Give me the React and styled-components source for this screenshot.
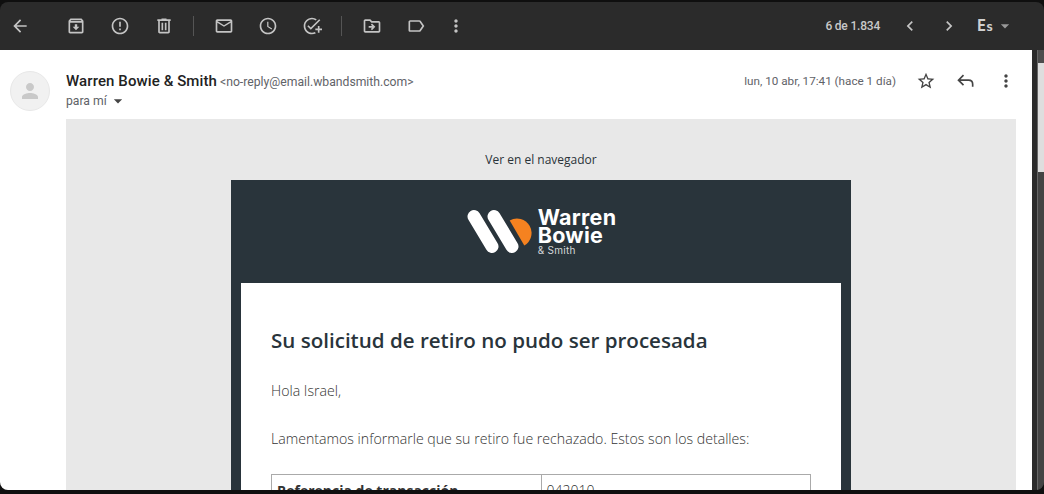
import React from 'react';
import styled, { createGlobalStyle } from 'styled-components';
import {
  MdArrowBack,
  MdOutlineArchive,
  MdErrorOutline,
  MdOutlineEmail,
  MdOutlineWatchLater,
  MdOutlineAddTask,
  MdOutlineDriveFileMove,
  MdOutlineLabel,
  MdMoreVert,
  MdChevronLeft,
  MdChevronRight,
  MdArrowDropDown,
  MdStarBorder,
  MdPerson,
} from 'react-icons/md';

const GlobalStyle = createGlobalStyle`
  html, body {
    margin: 0;
    height: 100%;
    background: #0f0f0f;
    overflow: hidden;
  }
  #root { height: 100%; }
`;

const Frame = styled.div`
  height: 494px;
  padding: 2px 0 4px;
  box-sizing: border-box;
  font-family: Roboto, "Liberation Sans", sans-serif;
`;

const Window = styled.div`
  height: 100%;
  display: flex;
  flex-direction: column;
  background: #2b2b2b;
  border-radius: 8px;
  overflow: hidden;
`;

const Toolbar = styled.div`
  height: 48px;
  flex: none;
  display: flex;
  align-items: center;
  color: #c4c4c4;
`;

const IconButton = styled.div`
  width: ${({ $w }) => $w || 44}px;
  margin-left: ${({ $ml }) => $ml || 0}px;
  flex: none;
  display: flex;
  align-items: center;
  justify-content: center;
  font-size: ${({ $size }) => $size || 20}px;
  color: ${({ $dim }) => ($dim ? '#999' : 'inherit')};
`;

const Divider = styled.div`
  width: 1px;
  height: 20px;
  margin: 0 8px 0 7px;
  background: #555;
`;

const Pager = styled.div`
  margin-left: auto;
  font-size: 12px;
  font-weight: 500;
  letter-spacing: -0.2px;
  color: #c8c8c8;
  margin-right: 10px;
`;

const LangLabel = styled.div`
  display: flex;
  align-items: baseline;
  margin-left: 9px;
  width: 18px;
  font-family: "DejaVu Sans Mono", monospace;
  font-weight: 700;
  color: #d0d0d0;
`;

const LangBig = styled.span`
  font-size: 15px;
`;

const LangSmall = styled.span`
  font-size: 12px;
`;

const Main = styled.div`
  flex: 1;
  min-height: 0;
  display: flex;
`;

const Content = styled.div`
  flex: 1;
  background: #fff;
  overflow: hidden;
`;

const ScrollGutter = styled.div`
  width: 12px;
  flex: none;
  padding-left: 5px;
  box-sizing: border-box;
`;

const ScrollTrack = styled.div`
  height: 100%;
  display: flex;
  flex-direction: column;
  background: #444;
  border-left: 1px solid #666;
`;

const ScrollArrow = styled.div`
  height: 13px;
  background: #4d4d4d;
`;

const ScrollThumb = styled.div`
  height: 109px;
  background: #dedede;
`;

const MessageHeader = styled.div`
  display: flex;
  padding: 21px 6px 0 10px;
  height: 69px;
  box-sizing: border-box;
`;

const Avatar = styled.div`
  width: 40px;
  height: 40px;
  flex: none;
  border-radius: 50%;
  background: #f1f1f1;
  border: 1px solid #e8e8e8;
  box-sizing: border-box;
  display: flex;
  align-items: center;
  justify-content: center;
  color: #c9c9c9;
  font-size: 24px;
`;

const Sender = styled.div`
  margin-left: 16px;
  flex: 1;
`;

const SenderLine = styled.div`
  display: flex;
  align-items: baseline;
  height: 20px;
  line-height: 20px;
`;

const SenderName = styled.span`
  font-size: 15px;
  font-weight: 500;
  letter-spacing: 0.1px;
  color: #222;
`;

const SenderMail = styled.span`
  font-size: 12.2px;
  color: #5f6368;
  margin-left: 3px;
`;

const ToLine = styled.div`
  display: flex;
  align-items: center;
  font-size: 12.2px;
  color: #5f6368;
  height: 20px;
`;

const Caret = styled.span`
  display: flex;
  font-size: 20px;
  margin-left: 1px;
  color: #444;
`;

const MessageActions = styled.div`
  display: flex;
  align-items: center;
  height: 20px;
  color: #444;
`;

const DateText = styled.span`
  font-size: 11.7px;
  color: #5f6368;
  margin-right: 10px;
`;

const ActionIcon = styled.div`
  width: 40px;
  display: flex;
  justify-content: center;
  font-size: 20px;
`;

const MailBody = styled.div`
  margin: 0 16px 0 66px;
  background: #e8e8e8;
  padding-top: 33px;
  font-family: "Open Sans", "Liberation Sans", sans-serif;
  color: #2a3338;
`;

const BrowserLink = styled.div`
  text-align: center;
  font-size: 12px;
  line-height: 16px;
  margin-bottom: 12px;
`;

const Card = styled.div`
  width: 620px;
  margin: 0 auto;
  background: #29343b;
  padding: 0 10px;
  box-sizing: border-box;
`;

const LogoRow = styled.div`
  height: 103px;
  display: flex;
  align-items: center;
  justify-content: center;
  gap: 4px;
`;

const LogoText = styled.div`
  display: flex;
  flex-direction: column;
  color: #fff;
  font-family: Inter, "Liberation Sans", sans-serif;
  font-weight: 700;
  font-size: 21.5px;
  line-height: 18.5px;
  letter-spacing: 0.3px;
`;

const LogoSub = styled.span`
  font-size: 10px;
  font-weight: 400;
  line-height: 11px;
  letter-spacing: 0.3px;
  color: #d5d8da;
`;

const Panel = styled.div`
  background: #fff;
  padding: 41px 30px 0;
`;

const Title = styled.h1`
  margin: 0 0 25px;
  font-size: 20.55px;
  line-height: 32px;
  font-weight: 600;
  color: #29343b;
`;

const Paragraph = styled.p`
  margin: 0 0 ${({ $gap }) => $gap || 28}px;
  font-size: 14.15px;
  line-height: 20px;
  font-weight: 300;
  color: #333;
`;

const DetailTable = styled.table`
  width: 540px;
  border-collapse: collapse;
  font-size: 14px;
`;

const Cell = styled.td`
  border: 1px solid #aaa;
  padding: 6px 5px;
  width: 50%;
  font-weight: ${({ $bold }) => ($bold ? 700 : 300)};
  color: #333;
`;

const DeleteIcon = () => (
  <svg width="20" height="20" viewBox="0 0 24 24" fill="currentColor">
    <path d="M15 4V3H9v1H4v2h1v13c0 1.1.9 2 2 2h10c1.1 0 2-.9 2-2V6h1V4h-5zm2 15H7V6h10v13zM9 8h2v9H9zm4 0h2v9h-2z" />
  </svg>
);

const ReplyIcon = () => (
  <svg width="20" height="20" viewBox="0 0 24 24" fill="none" stroke="currentColor" strokeWidth="2">
    <path d="M9 5l-6 6 6 6M3 11h12c3 0 5 2 5 5v3" />
  </svg>
);

const LogoMark = () => (
  <svg width="68" height="50" viewBox="0 0 68 50">
    <path d="M43.700 13.400A14.500 14.500 0 0 1 58.300 38.600z" fill="#f58220" />
    <path d="M8 9.500L26 39.500M28 9.500L46 39.500" stroke="#fff" strokeWidth="13" strokeLinecap="round" />
  </svg>
);

const App = () => {
  return (
    <Frame>
      <GlobalStyle />
      <Window>
        <Toolbar>
          <IconButton $w={40}><MdArrowBack /></IconButton>
          <IconButton $ml={14}><MdOutlineArchive /></IconButton>
          <IconButton><MdErrorOutline /></IconButton>
          <IconButton><DeleteIcon /></IconButton>
          <Divider />
          <IconButton><MdOutlineEmail /></IconButton>
          <IconButton><MdOutlineWatchLater /></IconButton>
          <IconButton><MdOutlineAddTask /></IconButton>
          <Divider />
          <IconButton><MdOutlineDriveFileMove /></IconButton>
          <IconButton><MdOutlineLabel /></IconButton>
          <IconButton $w={36}><MdMoreVert /></IconButton>
          <Pager>6 de 1.834</Pager>
          <IconButton $w={40}><MdChevronLeft /></IconButton>
          <IconButton $w={38}><MdChevronRight /></IconButton>
          <LangLabel><LangBig>E</LangBig><LangSmall>s</LangSmall></LangLabel>
          <IconButton $w={20} $dim><MdArrowDropDown /></IconButton>
          <IconButton $w={29} />
        </Toolbar>
        <Main>
          <Content>
            <MessageHeader>
              <Avatar><MdPerson /></Avatar>
              <Sender>
                <SenderLine>
                  <SenderName>Warren Bowie &amp; Smith</SenderName>
                  <SenderMail>&lt;no-reply@email.wbandsmith.com&gt;</SenderMail>
                </SenderLine>
                <ToLine>para mí<Caret><MdArrowDropDown /></Caret></ToLine>
              </Sender>
              <MessageActions>
                <DateText>lun, 10 abr, 17:41 (hace 1 día)</DateText>
                <ActionIcon><MdStarBorder /></ActionIcon>
                <ActionIcon><ReplyIcon /></ActionIcon>
                <ActionIcon><MdMoreVert /></ActionIcon>
              </MessageActions>
            </MessageHeader>
            <MailBody>
              <BrowserLink>Ver en el navegador</BrowserLink>
              <Card>
                <LogoRow>
                  <LogoMark />
                  <LogoText>
                    <span>Warren</span>
                    <span>Bowie</span>
                    <LogoSub>&amp; Smith</LogoSub>
                  </LogoText>
                </LogoRow>
                <Panel>
                  <Title>Su solicitud de retiro no pudo ser procesada</Title>
                  <Paragraph>Hola Israel,</Paragraph>
                  <Paragraph $gap={25}>Lamentamos informarle que su retiro fue rechazado. Estos son los detalles:</Paragraph>
                  <DetailTable>
                    <tbody>
                      <tr>
                        <Cell $bold>Referencia de transacción</Cell>
                        <Cell>042010</Cell>
                      </tr>
                    </tbody>
                  </DetailTable>
                </Panel>
              </Card>
            </MailBody>
          </Content>
          <ScrollGutter>
            <ScrollTrack>
              <ScrollArrow />
              <ScrollThumb />
            </ScrollTrack>
          </ScrollGutter>
        </Main>
      </Window>
    </Frame>
  );
};

export default App;
